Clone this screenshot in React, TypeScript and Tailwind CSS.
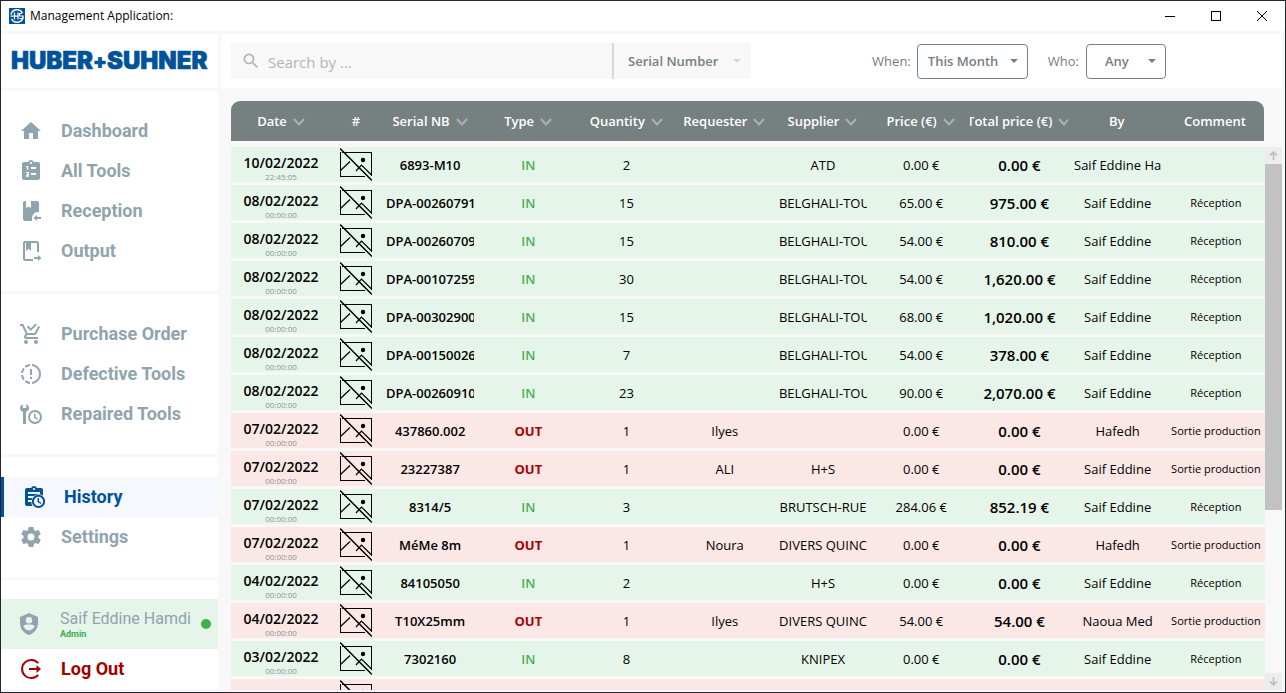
import type { ReactNode } from "react";

type Movement = {
  date: string;
  time: string;
  serial: string;
  type: "IN" | "OUT";
  qty: string;
  requester: string;
  supplier: string;
  price: string;
  total: string;
  by: string;
};

const row = (
  date: string,
  serial: string,
  type: "IN" | "OUT",
  qty: string,
  requester: string,
  supplier: string,
  price: string,
  total: string,
  by: string,
  time = "00:00:00",
): Movement => ({ date, time, serial, type, qty, requester, supplier, price, total, by });

const rows: Movement[] = [
  row("10/02/2022", "6893-M10", "IN", "2", "", "ATD", "0.00 €", "0.00 €", "Saif Eddine Ha", "22:45:05"),
  row("08/02/2022", "DPA-00260791", "IN", "15", "", "BELGHALI-TOU", "65.00 €", "975.00 €", "Saif Eddine"),
  row("08/02/2022", "DPA-00260709", "IN", "15", "", "BELGHALI-TOU", "54.00 €", "810.00 €", "Saif Eddine"),
  row("08/02/2022", "DPA-00107259", "IN", "30", "", "BELGHALI-TOU", "54.00 €", "1,620.00 €", "Saif Eddine"),
  row("08/02/2022", "DPA-00302900", "IN", "15", "", "BELGHALI-TOU", "68.00 €", "1,020.00 €", "Saif Eddine"),
  row("08/02/2022", "DPA-00150026", "IN", "7", "", "BELGHALI-TOU", "54.00 €", "378.00 €", "Saif Eddine"),
  row("08/02/2022", "DPA-00260910", "IN", "23", "", "BELGHALI-TOU", "90.00 €", "2,070.00 €", "Saif Eddine"),
  row("07/02/2022", "437860.002", "OUT", "1", "Ilyes", "", "0.00 €", "0.00 €", "Hafedh"),
  row("07/02/2022", "23227387", "OUT", "1", "ALI", "H+S", "0.00 €", "0.00 €", "Saif Eddine"),
  row("07/02/2022", "8314/5", "IN", "3", "", "BRUTSCH-RUE", "284.06 €", "852.19 €", "Saif Eddine"),
  row("07/02/2022", "MéMe 8m", "OUT", "1", "Noura", "DIVERS QUINC", "0.00 €", "0.00 €", "Hafedh"),
  row("04/02/2022", "84105050", "IN", "2", "", "H+S", "0.00 €", "0.00 €", "Saif Eddine"),
  row("04/02/2022", "T10X25mm", "OUT", "1", "Ilyes", "DIVERS QUINC", "54.00 €", "54.00 €", "Naoua Med"),
  row("03/02/2022", "7302160", "IN", "8", "", "KNIPEX", "0.00 €", "0.00 €", "Saif Eddine"),
];

const columns = [
  { label: "Date", sortable: true },
  { label: "#", sortable: false },
  { label: "Serial NB", sortable: true },
  { label: "Type", sortable: true },
  { label: "Quantity", sortable: true },
  { label: "Requester", sortable: true },
  { label: "Supplier", sortable: true },
  { label: "Price (€)", sortable: true },
  { label: "Total price (€)", sortable: true },
  { label: "By", sortable: false },
  { label: "Comment", sortable: false },
];

const gridCols = "grid grid-cols-[100px_50px_repeat(9,minmax(0,1fr))]";

function Icon({ children, className = "size-6" }: { children: ReactNode; className?: string }) {
  return (
    <svg viewBox="0 0 24 24" className={`${className} shrink-0`} fill="currentColor" aria-hidden="true">
      {children}
    </svg>
  );
}

const HomeIcon = () => (
  <Icon>
    <path d="M10,20V14H14V20H19V12H22L12,3L2,12H5V20H10Z" />
  </Icon>
);

const ListIcon = () => (
  <Icon>
    <path
      fillRule="evenodd"
      d="M19 3H14.82C14.4 1.84 13.3 1 12 1S9.6 1.84 9.18 3H5C3.9 3 3 3.9 3 5V19C3 20.1 3.9 21 5 21H19C20.1 21 21 20.1 21 19V5C21 3.9 20.1 3 19 3M12 3C12.55 3 13 3.45 13 4S12.55 5 12 5 11 4.55 11 4 11.45 3 12 3M8 7H9.2V11H8V8.2H7V7H8M7 13H10V15.4L8.4 16.6H10V17.8H7V16L8.8 14.5V14.1H7V13M12 8H17V10H12V8M12 14H17V16H12V14Z"
    />
  </Icon>
);

const ReceptionIcon = () => (
  <Icon>
    <path d="M16 18H18V16L14.5 19L18 22V20H22V18H16M13 22H6C4.9 22 4 21.1 4 20V4C4 2.9 4.9 2 6 2H7V9L9.5 7.5L12 9V2H18C19.1 2 20 2.9 20 4V13.1C19.7 13 19.3 13 19 13C15.7 13 13 15.7 13 19C13 20.1 13 21 13 22Z" />
  </Icon>
);

const OutputIcon = () => (
  <Icon>
    <path d="M14 20H6V4H7V12L9.5 9.75L12 12V4H18V13H20V4C20 2.9 19.1 2 18 2H6C4.9 2 4 2.9 4 4V20C4 21.1 4.9 22 6 22H14V20M19 16V18H15V20H19V22L22.5 19L19 16Z" />
  </Icon>
);

const CartIcon = () => (
  <Icon>
    <path d="M9 20C9 21.1 8.1 22 7 22S5 21.1 5 20 5.9 18 7 18 9 18.9 9 20M17 18C15.9 18 15 18.9 15 20S15.9 22 17 22 19 21.1 19 20 18.1 18 17 18M7.2 14.8V14.7L8.1 13H15.5C16.2 13 16.9 12.6 17.2 12L21.1 5L19.4 4L15.5 11H8.5L4.3 2H1V4H3L6.6 11.6L5.2 14C5.1 14.3 5 14.6 5 15C5 16.1 5.9 17 7 17H19V15H7.4C7.3 15 7.2 14.9 7.2 14.8M18 2.8L16.6 1.4L11.8 6.2L9.2 3.6L7.8 5L11.8 9L18 2.8Z" />
  </Icon>
);

const DefectiveIcon = () => (
  <Icon>
    <path d="M13 2.03V4.05C17.39 4.59 20.5 8.58 19.96 12.97C19.5 16.61 16.64 19.5 13 19.93V21.93C18.5 21.38 22.5 16.5 21.95 11C21.5 6.25 17.73 2.5 13 2.03M11 2.06C9.05 2.25 7.19 3 5.67 4.26L7.1 5.74C8.22 4.84 9.57 4.26 11 4.06V2.06M4.26 5.67C3 7.19 2.25 9.04 2.05 11H4.05C4.24 9.58 4.8 8.23 5.69 7.1L4.26 5.67M2.06 13C2.26 14.96 3.03 16.81 4.27 18.33L5.69 16.9C4.81 15.77 4.24 14.42 4.06 13H2.06M7.1 18.37L5.67 19.74C7.18 21 9.04 21.79 11 22V20C9.58 19.82 8.23 19.25 7.1 18.37M13 7H11V13H13V7M13 15H11V17H13V15Z" />
  </Icon>
);

const RepairedIcon = () => (
  <Icon>
    <path d="M10 6C10 7.9 8.8 9.3 7 9.8V22H4V9.8C2.2 9.3 1 7.9 1 6C1 4.2 2.1 2.8 3.7 2.2V6H7.3V2.2C8.9 2.8 10 4.2 10 6Z" />
    <path
      fillRule="evenodd"
      d="M16 8A7 7 0 1 0 16 22A7 7 0 1 0 16 8M16 10A5 5 0 1 1 16 20A5 5 0 1 1 16 10M15 11.5H16.5V15L19 16.5L18.2 17.7L15 15.8V11.5Z"
    />
  </Icon>
);

const HistoryIcon = () => (
  <Icon>
    <path
      fillRule="evenodd"
      d="M19 3H14.82C14.4 1.84 13.3 1 12 1S9.6 1.84 9.18 3H5C3.9 3 3 3.9 3 5V19C3 20.1 3.9 21 5 21H10.5A7.3 7.3 0 0 1 9.3 17H6V15H9.5L10.2 13H6V11H12A7 7 0 0 1 21 10.7V5C21 3.9 20.1 3 19 3M12 3C12.55 3 13 3.45 13 4S12.55 5 12 5 11 4.55 11 4 11.45 3 12 3M6 7H18V9H6V7Z"
    />
    <path
      fillRule="evenodd"
      d="M16.5 9.8A6.6 6.6 0 1 0 16.5 23A6.6 6.6 0 1 0 16.5 9.8M16.5 11.8A4.6 4.6 0 1 1 16.5 21A4.6 4.6 0 1 1 16.5 11.8M15.5 13H17V16.3L19.3 17.7L18.6 19L15.5 17.1V13Z"
    />
  </Icon>
);

const SettingsIcon = () => (
  <Icon>
    <path d="M12,15.5A3.5,3.5 0 0,1 8.5,12A3.5,3.5 0 0,1 12,8.5A3.5,3.5 0 0,1 15.5,12A3.5,3.5 0 0,1 12,15.5M19.43,12.97C19.47,12.65 19.5,12.33 19.5,12C19.5,11.67 19.47,11.34 19.43,11L21.54,9.37C21.73,9.22 21.78,8.95 21.66,8.73L19.66,5.27C19.54,5.05 19.27,4.96 19.05,5.05L16.56,6.05C16.04,5.66 15.5,5.32 14.87,5.07L14.5,2.42C14.46,2.18 14.25,2 14,2H10C9.75,2 9.54,2.18 9.5,2.42L9.13,5.07C8.5,5.32 7.96,5.66 7.44,6.05L4.95,5.05C4.73,4.96 4.46,5.05 4.34,5.27L2.34,8.73C2.21,8.95 2.27,9.22 2.46,9.37L4.57,11C4.53,11.34 4.5,11.67 4.5,12C4.5,12.33 4.53,12.65 4.57,12.97L2.46,14.63C2.27,14.78 2.21,15.05 2.34,15.27L4.34,18.73C4.46,18.95 4.73,19.03 4.95,18.95L7.44,17.94C7.96,18.34 8.5,18.68 9.13,18.93L9.5,21.58C9.54,21.82 9.75,22 10,22H14C14.25,22 14.46,21.82 14.5,21.58L14.87,18.93C15.5,18.67 16.04,18.34 16.56,17.94L19.05,18.95C19.27,19.03 19.54,18.95 19.66,18.73L21.66,15.27C21.78,15.05 21.73,14.78 21.54,14.63L19.43,12.97Z" />
  </Icon>
);

const ShieldIcon = () => (
  <Icon>
    <path
      fillRule="evenodd"
      d="M12 1L3 5V11C3 16.55 6.84 21.74 12 23C17.16 21.74 21 16.55 21 11V5L12 1M12 5A3.2 3.2 0 1 1 12 11.4A3.2 3.2 0 1 1 12 5M6.2 14C7.6 12.7 9.8 12.4 12 12.4S16.4 12.7 17.8 14C16.7 16.8 14.6 18.4 12 18.4S7.3 16.8 6.2 14Z"
    />
  </Icon>
);

const LogoutIcon = () => (
  <Icon>
    <path
      d="M19.2 6.2A9.1 9.1 0 1 0 19.2 17.8"
      fill="none"
      stroke="currentColor"
      strokeWidth="2"
    />
    <path d="M10 11H17.5V8L22 12L17.5 16V13H10V11Z" />
  </Icon>
);

const Chevron = () => (
  <svg viewBox="0 0 12 8" className="h-2 w-3 shrink-0 text-[#aab2b2]" fill="none" stroke="currentColor" strokeWidth="2" aria-hidden="true">
    <path d="M1 1L6 6.5L11 1" />
  </svg>
);

const NoImage = () => (
  <svg viewBox="0 0 32 33" className="h-[33px] w-8 shrink-0" fill="none" stroke="#000" strokeWidth="1" role="img" aria-label="No picture">
    <path d="M2 4.5H31.5V28M25 28.5H0.5V4" shapeRendering="crispEdges" />
    <path d="M0.5 22.5L10 13.5M16 23L21.5 17L31.5 27" strokeWidth="1.2" />
    <path d="M0 0.5L32 32.5" strokeWidth="1.5" />
    <circle cx="23" cy="12" r="2.2" fill="#000" stroke="none" />
  </svg>
);

function NavLink({ icon, label, active = false }: { icon: ReactNode; label: string; active?: boolean }) {
  return (
    <a
      href="#"
      aria-current={active ? "page" : undefined}
      className={`flex h-10 items-center gap-[18px] pl-[18px] font-[Roboto,sans-serif] text-lg font-bold ${
        active ? "border-l-[3px] border-[#005299] bg-[#f5f8ff] text-[#005299]" : "text-[#90a4ae]"
      }`}
    >
      {icon}
      {label}
    </a>
  );
}

function Caret({ className }: { className: string }) {
  return (
    <svg viewBox="0 0 8 4" className={`pointer-events-none absolute h-1 w-2 ${className}`} fill="currentColor" aria-hidden="true">
      <path d="M0 0H8L4 4Z" />
    </svg>
  );
}

function Cell({ children, className = "" }: { children?: ReactNode; className?: string }) {
  return (
    <td className="flex min-w-0 items-center px-[5px] pt-0.5">
      <div className={`w-full overflow-hidden text-center whitespace-nowrap ${className}`}>{children}</div>
    </td>
  );
}

export default function App() {
  return (
    <div className="flex h-screen flex-col overflow-hidden border border-[#24262d] bg-[#f8f8f8] font-['Open_Sans','Noto_Sans',sans-serif] text-[13px] text-black">
      <header className="flex h-[30px] shrink-0 items-center bg-white pl-2">
        <svg viewBox="0 0 16 16" className="size-4" fill="none" stroke="#fff" aria-hidden="true">
          <path fill="#005299" stroke="none" d="M0 0H16V16H0Z" />
          <path d="M2 6.5A6.2 6.2 0 0 1 13.5 5M14 9.5A6.2 6.2 0 0 1 2.5 11" strokeWidth="1.4" />
          <path d="M1.5 8.2H9.5M5.5 4.5V11.5M9 4.5V11.5M13 5.5H10.5V8H14V10.5H10.5" strokeWidth="1.2" />
        </svg>
        <h1 className="pl-[5px] text-xs">Management Application:</h1>
        <div className="ml-auto flex">
          <button aria-label="Minimize" className="flex h-[30px] w-[46px] items-center justify-center">
            <svg viewBox="0 0 10 10" className="size-2.5" stroke="#000" shapeRendering="crispEdges">
              <path d="M0 5.5H10" />
            </svg>
          </button>
          <button aria-label="Maximize" className="flex h-[30px] w-[46px] items-center justify-center">
            <svg viewBox="0 0 10 10" className="size-2.5" fill="none" stroke="#000" shapeRendering="crispEdges">
              <path d="M0.5 0.5H9.5V9.5H0.5Z" />
            </svg>
          </button>
          <button aria-label="Close" className="flex h-[30px] w-[46px] items-center justify-center">
            <svg viewBox="0 0 10 10" className="size-2.5" stroke="#000">
              <path d="M0 0L10 10M10 0L0 10" />
            </svg>
          </button>
        </div>
      </header>

      <div className="flex min-h-0 flex-1 gap-[3px] pt-[3px]">
        <aside className="flex w-[217px] shrink-0 flex-col gap-[3px]">
          <div className="flex h-[54px] items-center bg-white pl-2.5 font-[Inter,sans-serif] text-2xl font-black text-[#005299] [-webkit-text-stroke:0.6px_#005299]">
            HUBER<span className="text-xl">+</span>SUHNER
          </div>
          <nav className="flex flex-col gap-[3px]" aria-label="Main">
            <div className="bg-white py-5">
              <NavLink icon={<HomeIcon />} label="Dashboard" />
              <NavLink icon={<ListIcon />} label="All Tools" />
              <NavLink icon={<ReceptionIcon />} label="Reception" />
              <NavLink icon={<OutputIcon />} label="Output" />
            </div>
            <div className="bg-white py-5">
              <NavLink icon={<CartIcon />} label="Purchase Order" />
              <NavLink icon={<DefectiveIcon />} label="Defective Tools" />
              <NavLink icon={<RepairedIcon />} label="Repaired Tools" />
            </div>
            <div className="bg-white py-5">
              <NavLink icon={<HistoryIcon />} label="History" active />
              <NavLink icon={<SettingsIcon />} label="Settings" />
            </div>
          </nav>
          <div className="bg-white pt-[19px] font-[Roboto,sans-serif]">
            <div className="flex h-[50px] items-center bg-[#e6f5e9] pr-[7px] pl-4 text-[#90a4ae]">
              <ShieldIcon />
              <div className="pt-0.5 pl-[19px]">
                <p className="text-base leading-[18px]">Saif Eddine Hamdi</p>
                <p className="text-[9px] leading-3 font-bold text-[#3fae4c]">Admin</p>
              </div>
              <span className="ml-auto size-2.5 rounded-full bg-[#3fae4c]" />
            </div>
            <button className="flex h-10 w-full items-center gap-[18px] pl-[18px] text-lg font-bold text-[#a00000]">
              <LogoutIcon />
              Log Out
            </button>
          </div>
        </aside>

        <main className="flex min-w-0 flex-1 flex-col pr-[3px] pb-[2px]">
          <div className="flex h-[54px] shrink-0 items-center bg-white pr-[116px] pl-[10px] text-[#768080]">
            <div className="flex h-9 w-[520px] bg-[#f8f8f8]">
              <label className="flex flex-1 items-center gap-[7px] pl-2.5 text-[#b0b5b5]">
                <Icon className="size-5">
                  <path d="M9.5,3A6.5,6.5 0 0,1 16,9.5C16,11.11 15.41,12.59 14.44,13.73L14.71,14H15.5L20.5,19L19,20.5L14,15.5V14.71L13.73,14.44C12.59,15.41 11.11,16 9.5,16A6.5,6.5 0 0,1 3,9.5A6.5,6.5 0 0,1 9.5,3M9.5,5C7,5 5,7 5,9.5C5,12 7,14 9.5,14C12,14 14,12 14,9.5C14,7 12,5 9.5,5Z" />
                </Icon>
                <input aria-label="Search" placeholder="Search by ..." className="min-w-0 flex-1 bg-transparent pt-0.5 text-[15px] outline-none placeholder:text-[#b0b5b5]" />
              </label>
              <div className="relative flex w-[139px] items-center border-l-2 border-[#d9d9d9]">
                <select aria-label="Search field" className="h-full w-full appearance-none bg-transparent pt-0.5 pl-3.5 text-[13px] font-semibold">
                  <option>Serial Number</option>
                </select>
                <Caret className="right-2.5 text-[#d5d8d8]" />
              </div>
            </div>
            <label className="ml-auto flex items-center gap-1.5">
              <span className="pt-0.5">When:</span>
              <span className="relative flex items-center">
                <select className="h-[35px] w-[111px] appearance-none rounded border border-[#768080] bg-white pt-0.5 pl-2.5 text-[13px] font-semibold">
                  <option>This Month</option>
                </select>
                <Caret className="right-2.5" />
              </span>
            </label>
            <label className="ml-5 flex items-center gap-[7px]">
              <span className="pt-0.5">Who:</span>
              <span className="relative flex items-center">
                <select className="h-[35px] w-20 appearance-none rounded border border-[#768080] bg-white pt-0.5 pl-[18px] text-[13px] font-semibold">
                  <option>Any</option>
                </select>
                <Caret className="right-2.5" />
              </span>
            </label>
          </div>

          <div className="flex min-h-0 flex-1 pt-[13px] pl-[10px]">
            <table className="flex min-w-0 flex-1 flex-col">
              <thead className="block shrink-0">
                <tr className={`${gridCols} mr-px h-10 rounded-t-[9px] bg-[#768080] text-white`}>
                  {columns.map((c) => (
                    <th key={c.label} className="flex min-w-0 items-center justify-center gap-1.5 overflow-hidden pt-0.5 font-semibold whitespace-nowrap">
                      {c.label}
                      {c.sortable && <Chevron />}
                    </th>
                  ))}
                </tr>
              </thead>
              <tbody className="mt-1.5 flex min-h-0 flex-1 flex-col gap-[3px] overflow-hidden">
                {rows.map((r, i) => (
                  <tr key={i} className={`${gridCols} h-[35px] shrink-0 ${r.type === "IN" ? "bg-[#e6f5e9]" : "bg-[#fbe7e6]"}`}>
                    <td className="flex flex-col items-center justify-end">
                      <span className="text-sm leading-[18px] font-semibold">{r.date}</span>
                      <span className="text-[8px] leading-[10px] text-[#8b9595]">{r.time}</span>
                    </td>
                    <td className="flex items-center justify-center">
                      <NoImage />
                    </td>
                    <Cell className="font-semibold">{r.serial}</Cell>
                    <Cell className={r.type === "IN" ? "font-semibold text-[#4caf50]" : "font-bold text-[#a80000]"}>{r.type}</Cell>
                    <Cell>{r.qty}</Cell>
                    <Cell>{r.requester}</Cell>
                    <Cell>{r.supplier}</Cell>
                    <Cell>{r.price}</Cell>
                    <Cell className="text-[15px] font-semibold">{r.total}</Cell>
                    <Cell>{r.by}</Cell>
                    <td className="flex items-center justify-center pt-0.5 text-[11px] whitespace-nowrap">
                      {i === 0 ? "" : r.type === "IN" ? "Réception" : "Sortie production"}
                    </td>
                  </tr>
                ))}
                <tr className={`${gridCols} h-[35px] shrink-0 bg-[#fbe7e6]`}>
                  <td />
                  <td className="flex items-center justify-center">
                    <NoImage />
                  </td>
                </tr>
              </tbody>
            </table>
            <div className="mt-[46px] flex w-[17px] shrink-0 flex-col" aria-hidden="true">
              <div className="flex h-[17px] items-center justify-center bg-[#ededed]">
                <svg viewBox="0 0 9 9" className="size-[9px]" fill="none" stroke="#bdbdbd" strokeWidth="1.6">
                  <path d="M4.5 9V1M1 4.5L4.5 1L8 4.5" />
                </svg>
              </div>
              <div className="flex-1">
                <div className="h-[68%] bg-[#c2c2c2]" />
              </div>
              <div className="flex h-[17px] items-center justify-center bg-[#ededed]">
                <svg viewBox="0 0 9 9" className="size-[9px]" fill="none" stroke="#bdbdbd" strokeWidth="1.6">
                  <path d="M4.5 0V8M1 4.5L4.5 8L8 4.5" />
                </svg>
              </div>
            </div>
          </div>
        </main>
      </div>
    </div>
  );
}
